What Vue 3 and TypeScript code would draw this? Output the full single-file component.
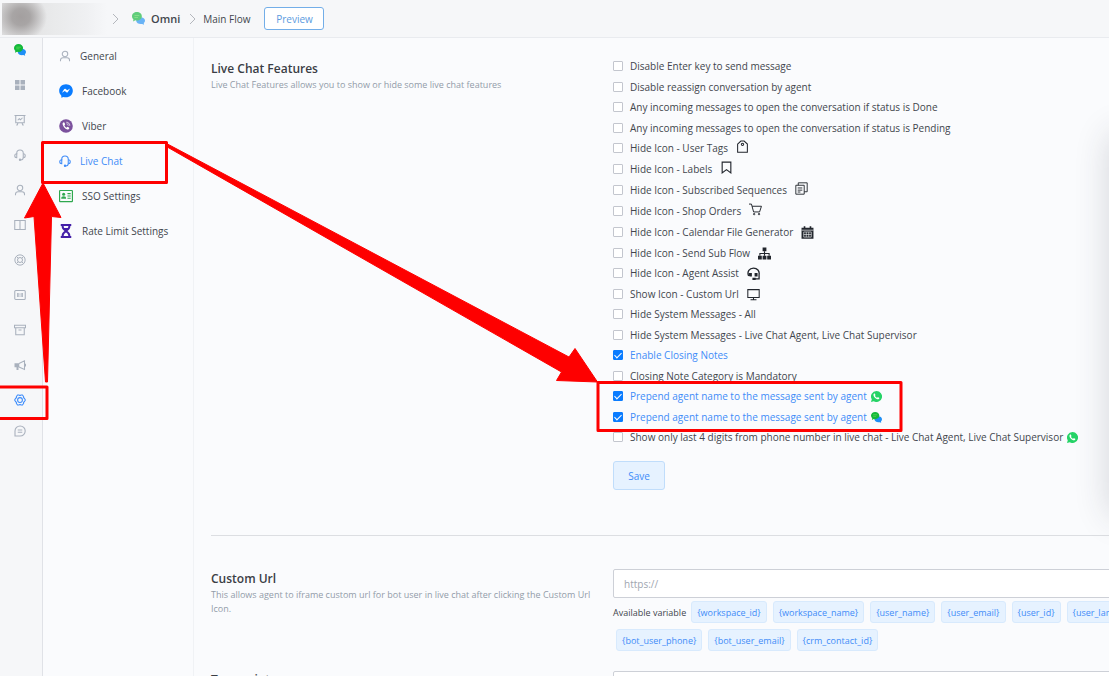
<script setup lang="ts">
import { reactive, ref } from 'vue'

interface Glyph { box: string; art: string }

const whatsapp = '<path fill="#25d366" d="M12 0a12 12 0 0 0-10.300 18.100L0 24l6.100-1.600A12 12 0 1 0 12 0z"/><path fill="#fff" d="M8.600 6.200c-.300-.600-.600-.600-1-.600-.400 0-2.300.700-2.300 3.100 0 1.800 1.200 3.600 2.700 5.300 2.200 2.500 4.800 4 7 4.100 1.800 0 3.200-1.100 3.300-2.700 0-.500-.100-.700-.500-.900l-2.300-1.100c-.400-.200-.700-.100-1 .300l-.800 1c-.300.300-.600.300-.900.100-1.800-.800-3.100-2-4-3.700-.200-.300-.100-.500.100-.800l.700-.900c.200-.300.200-.500.100-.800z"/>'

const glyphs: Record<string, Glyph> = {
  chats: { box: '0 0 24 24', art: '<path fill="#1e8ff5" d="M15.500 9.500c5 0 8.500 2.700 8.500 6.300 0 1.900-.900 3.500-2.300 4.700l.6 3-3.600-1.400c-5 1.100-10.700-1.100-11.200-6.300z"/><path fill="#12b83a" d="M9 0c5.200 0 9.200 3.400 9.200 7.900s-4 7.900-9.200 7.900c-1 0-2-.1-2.900-.400L2 17.500l.7-3.800C1 12.200 0 10.200 0 7.900 0 3.400 4 0 9 0z"/><path fill="#5fdc55" d="M4.500 5.500h9v1.600h-9zM4.500 9h6.500v1.600H4.500z"/>' },
  grid: { box: '0 0 24 24', art: '<path fill="currentColor" d="M2 2h9v9H2zm11 0h9v9h-9zM2 13h9v9H2zm11 0h9v9h-9z"/>' },
  board: { box: '0 0 24 24', art: '<g fill="none" stroke="currentColor" stroke-width="2.100"><path d="M1 3h22M3.500 3v14.500h17V3M8 17.500 6.500 22H4.500M16 17.500l1.500 4.500h2"/><path d="m7.500 12.500 3-3 2.500 2 4-4"/></g>' },
  headset: { box: '0 0 24 24', art: '<g fill="none" stroke="currentColor" stroke-width="2.100"><path d="M5.500 10.500V8.500a6.500 6.500 0 0 1 13 0v8c0 3.500-2 5.500-5 5.500"/><path d="M5.500 9.500C3 9.500 1.500 11 1.500 13.500S3 17.500 5.500 17.500zM18.500 9.500c2.500 0 4 1.500 4 4s-1.500 4-4 4"/><circle cx="12" cy="21.500" r="1.300"/></g>' },
  person: { box: '0 0 24 24', art: '<g fill="none" stroke="currentColor" stroke-width="2.100"><circle cx="12" cy="8" r="5.500"/><path d="M3 22.500v-2.500c0-3 2-4.500 5-4.500h8c3 0 5 1.500 5 4.500v2.500"/></g>' },
  columns: { box: '0 0 24 24', art: '<path fill="none" stroke="currentColor" stroke-width="2.100" d="M1.500 3h21v18h-21zM12 3v18"/>' },
  ring: { box: '0 0 24 24', art: '<g fill="none" stroke="currentColor" stroke-width="2"><circle cx="12" cy="12" r="10.300"/><circle cx="12" cy="12" r="5"/><path d="M5 5l3.500 3.500M19 5l-3.500 3.500M5 19l3.500-3.500M19 19l-3.500-3.500"/></g>' },
  ratio: { box: '0 0 24 24', art: '<rect x="1.500" y="3" width="21" height="18" rx="2" fill="none" stroke="currentColor" stroke-width="2.100"/><path fill="none" stroke="currentColor" stroke-width="1.700" d="M7 8v8M9.500 8v8M14.500 8v8M17 8v8M12 9.500v1.500M12 13.500V15"/>' },
  archive: { box: '0 0 24 24', art: '<path fill="none" stroke="currentColor" stroke-width="2.100" d="M1 2.500h22v5H1zM3.500 7.500v14h17v-14M9 12h6"/>' },
  megaphone: { box: '0 0 24 24', art: '<path fill="currentColor" d="M1 8.500h9.500v8H9V22H5v-5.500H1z"/><path fill="none" stroke="currentColor" stroke-width="2.100" d="M10 9 21 3.500v17.500L10 16M21.500 10.500h1.500v3.500h-1.500"/>' },
  cog: { box: '0 0 24 24', art: '<g fill="none" stroke="currentColor" stroke-width="2.100"><path stroke-linejoin="round" d="M7 2h3l2 1.300L14 2h3l2.300 3.500-.2 2 1.600.9 2 3.600-2 3.600-1.600.9.200 2L17 22h-3l-2-1.300L10 22H7l-2.300-3.500.2-2-1.600-.9-2-3.600 2-3.600 1.600-.9-.2-2z"/><circle cx="12" cy="12" r="4.800"/></g>' },
  comment: { box: '0 0 24 24', art: '<g fill="none" stroke="currentColor" stroke-width="2.200"><path d="M2 22V12a10.200 10 0 1 1 10.200 10z"/><path d="M7.500 10h9M7.500 14.500h9"/></g>' },
  messenger: { box: '0 0 24 24', art: '<path fill="#0a7cff" d="M12 .5C5.300.5.300 5.300.300 11.700c0 3.400 1.400 6.300 3.700 8.300V23.500l3.500-1.400c1.400.5 2.900.8 4.500.8 6.700 0 11.700-4.800 11.700-11.200S18.700.5 12 .5z"/><path fill="#fff" d="m5 15 3.700-5.900c.6-.9 1.800-1.200 2.700-.5l2.700 2 4.900-2.800-3.700 5.900c-.6.900-1.800 1.200-2.700.5l-2.700-2z"/>' },
  viber: { box: '0 0 24 24', art: '<circle cx="12" cy="12" r="11.700" fill="#7b519d"/><path fill="#fff" d="M8.500 5.500c-1.500.5-2.700 1.800-2.300 3.300 1.200 4.300 3.800 7.400 8 9.200 1.500.5 3-.7 3.500-2.100.200-.6-2.800-2.700-3.400-2.500l-1.500 1.400c-1.700-.8-3-2.200-3.600-4L10.500 9.500c.2-.8-1.400-4-2-4z"/><path fill="none" stroke="#fff" stroke-width="1.300" d="M12.500 5.500c3.500 0 6 2.500 6 6M13 8.300c2 .1 2.800 1.200 2.900 3"/>' },
  idcard: { box: '0 0 24 24', art: '<rect x="1" y="2.500" width="22" height="19" rx="1" fill="none" stroke="#2fa84f" stroke-width="2"/><circle cx="8" cy="9" r="2.600" fill="#2fa84f"/><path fill="#2fa84f" d="M3.800 16.500c0-2.500 1.500-4 4.200-4s4.200 1.500 4.200 4zM14.500 7H20v2.200h-5.500zM14.500 11H20v2h-5.500zM14.500 14.800H20v1.700h-5.500z"/>' },
  hourglass: { box: '0 0 24 24', art: '<path fill="#4420a8" d="M3 0h18v3.500h-1.500c0 4.500-2 6.500-5 8.500 3 2 5 4 5 8.500H21V24H3v-3.500h1.500c0-4.500 2-6.500 5-8.500-3-2-5-4-5-8.500H3z"/><path fill="#fafbfd" d="M8 3.500h8c0 1.500-.4 2.500-1 3.500H9c-.6-1-1-2-1-3.500zM8 20.500c.3-3 2-5 4-6 2 1 3.700 3 4 6z"/>' },
  tag: { box: '0 0 24 24', art: '<g fill="none" stroke="currentColor" stroke-width="1.900"><path d="M3 7.500 9 2h6l6 5.500v15H3z"/><circle cx="12" cy="8" r="2.200"/></g>' },
  bookmark: { box: '0 0 24 24', art: '<path fill="none" stroke="currentColor" stroke-width="2.100" d="M4 2h16v20l-8-6-8 6z"/>' },
  sequences: { box: '0 0 24 24', art: '<path fill="none" stroke="currentColor" stroke-width="1.700" d="M1.500 6H17V22.500H1.500zM6 6V1.500h16.500v16.500H17M5 11h8.500M5 15h8.500M5 18.500h5"/>' },
  cart: { box: '0 0 24 24', art: '<g fill="none" stroke="currentColor" stroke-width="1.800"><path d="M0 2h4.500l4 14.500h11L23 6H5.700"/><circle cx="9.500" cy="20.500" r="1.300"/><circle cx="18.500" cy="20.500" r="1.300"/></g>' },
  calendar: { box: '0 0 24 24', art: '<path fill="currentColor" d="M1 3h4V.5h3V3h8V.5h3V3h4v20.500H1z"/><path fill="#fafbfd" d="M1 7h22v1.200H1z"/><path fill="none" stroke="#fafbfd" stroke-width="1.100" d="M5 11h14v9.500H5zM5 15.700h14M9.700 11v9.500M14.300 11v9.500"/>' },
  sitemap: { box: '0 0 24 24', art: '<path fill="currentColor" d="M8.500 1h7v7h-7zM0 16h7v7H0zM8.500 16h7v7h-7zM17 16h7v7h-7z"/><path fill="none" stroke="currentColor" stroke-width="2" d="M3.500 16v-4h17v4M12 8v8"/>' },
  agent: { box: '0 0 24 24', art: '<path fill="none" stroke="currentColor" stroke-width="2.400" d="M3 16.500C-.5 8.500 4.500 2 12 2c7 0 11.500 5.500 10.300 12v8H12"/><path fill="currentColor" d="M3 11h6v6.500H5L3 15zM14 11h5.500v6.500H14zM10 20h6v3.800h-6z"/>' },
  monitor: { box: '0 0 24 24', art: '<path fill="none" stroke="currentColor" stroke-width="1.900" d="M1.500 3h21v14.500h-21zM12 17.500v4M6.500 21.500h11"/>' },
  whatsapp: { box: '0 0 24 24', art: whatsapp },
}

const rail = [
  { id: 'chats', name: 'Channels' }, { id: 'grid', name: 'Dashboard' }, { id: 'board', name: 'Analytics' },
  { id: 'headset', name: 'Live chat' }, { id: 'person', name: 'Contacts' }, { id: 'columns', name: 'Content' },
  { id: 'ring', name: 'Support' }, { id: 'ratio', name: 'Tests' }, { id: 'archive', name: 'Archive' },
  { id: 'megaphone', name: 'Broadcast' }, { id: 'cog', name: 'Settings' },
]

const menu = [
  { icon: 'person', label: 'General', line: true },
  { icon: 'messenger', label: 'Facebook' },
  { icon: 'viber', label: 'Viber' },
  { icon: 'headset', label: 'Live Chat', line: true, active: true },
  { icon: 'idcard', label: 'SSO Settings' },
  { icon: 'hourglass', label: 'Rate Limit Settings' },
]

interface Option { label: string; on: boolean; icon?: string; raised?: boolean; small?: boolean }
const options = reactive<Option[]>([
  { label: 'Disable Enter key to send message', on: false },
  { label: 'Disable reassign conversation by agent', on: false },
  { label: 'Any incoming messages to open the conversation if status is Done', on: false },
  { label: 'Any incoming messages to open the conversation if status is Pending', on: false },
  { label: 'Hide Icon - User Tags', on: false, icon: 'tag', raised: true },
  { label: 'Hide Icon - Labels', on: false, icon: 'bookmark', raised: true },
  { label: 'Hide Icon - Subscribed Sequences', on: false, icon: 'sequences', raised: true },
  { label: 'Hide Icon - Shop Orders', on: false, icon: 'cart', raised: true },
  { label: 'Hide Icon - Calendar File Generator', on: false, icon: 'calendar' },
  { label: 'Hide Icon - Send Sub Flow', on: false, icon: 'sitemap' },
  { label: 'Hide Icon - Agent Assist', on: false, icon: 'agent' },
  { label: 'Show Icon - Custom Url', on: false, icon: 'monitor' },
  { label: 'Hide System Messages - All', on: false },
  { label: 'Hide System Messages - Live Chat Agent, Live Chat Supervisor', on: false },
  { label: 'Enable Closing Notes', on: true },
  { label: 'Closing Note Category is Mandatory', on: false },
  { label: 'Prepend agent name to the message sent by agent', on: true, icon: 'whatsapp', small: true },
  { label: 'Prepend agent name to the message sent by agent', on: true, icon: 'chats', small: true },
  { label: 'Show only last 4 digits from phone number in live chat - Live Chat Agent, Live Chat Supervisor', on: false, icon: 'whatsapp', small: true },
])

const variables = [
  '{workspace_id}', '{workspace_name}', '{user_name}', '{user_email}', '{user_id}', '{user_lang}',
  '{bot_user_phone}', '{bot_user_email}', '{crm_contact_id}',
]
const customUrl = ref('')
const nextValue = ref('')
</script>

<template>
  <div class="app">
    <header class="topbar">
      <span class="workspace" aria-hidden="true"></span>
      <svg class="chevron" viewBox="0 0 8 12"><path d="m2 1 5 5-5 5" /></svg>
      <svg class="brand" :viewBox="glyphs.chats.box" v-html="glyphs.chats.art"></svg>
      <a class="crumb strong" href="#">Omni</a>
      <svg class="chevron" viewBox="0 0 8 12"><path d="m2 1 5 5-5 5" /></svg>
      <a class="crumb" href="#">Main Flow</a>
      <button class="preview" type="button">Preview</button>
    </header>

    <div class="body">
      <nav class="rail" aria-label="Main">
        <div class="rail-group">
          <button v-for="item in rail" :key="item.id" type="button" :aria-label="item.name" :class="{ current: item.id === 'cog' }">
            <svg :viewBox="glyphs[item.id].box" v-html="glyphs[item.id].art"></svg>
          </button>
        </div>
        <button type="button" aria-label="Feedback">
          <svg :viewBox="glyphs.comment.box" v-html="glyphs.comment.art"></svg>
        </button>
      </nav>

      <nav class="menu" aria-label="Settings">
        <a v-for="item in menu" :key="item.label" href="#" :class="{ line: item.line, active: item.active }">
          <svg :viewBox="glyphs[item.icon].box" v-html="glyphs[item.icon].art"></svg>
          <span>{{ item.label }}</span>
        </a>
      </nav>

      <main class="content">
        <section class="section features">
          <div class="intro">
            <h2>Live Chat Features</h2>
            <p>Live Chat Features allows you to show or hide some live chat features</p>
          </div>
          <div class="fields">
            <ul class="options">
              <li v-for="(option, i) in options" :key="i" :class="{ roomy: option.raised }">
                <label :class="{ on: option.on }">
                  <input v-model="option.on" type="checkbox" />
                  <span>{{ option.label }}</span>
                  <svg
                    v-if="option.icon"
                    :class="{ raised: option.raised, small: option.small }"
                    :viewBox="glyphs[option.icon].box"
                    v-html="glyphs[option.icon].art"
                  ></svg>
                </label>
              </li>
            </ul>
            <button class="save" type="button">Save</button>
          </div>
        </section>

        <section class="section custom">
          <div class="intro">
            <h2>Custom Url</h2>
            <p>This allows agent to iframe custom url for bot user in live chat after clicking the Custom Url Icon.</p>
          </div>
          <div class="fields">
            <input v-model="customUrl" class="text" type="url" placeholder="https://" aria-label="Custom Url" />
            <div class="variables">
              <span>Available variable</span>
              <button v-for="name in variables" :key="name" type="button">{{ name }}</button>
            </div>
          </div>
        </section>

        <section class="section next">
          <div class="intro"><h2>Transcript</h2></div>
          <div class="fields"><input v-model="nextValue" class="text" type="text" aria-label="Transcript" /></div>
        </section>
      </main>
    </div>

    <div class="drawer" aria-hidden="true"></div>
    <svg class="marks" aria-hidden="true">
      <g fill="none" stroke="#fe0000" stroke-width="3" stroke-linejoin="round">
        <rect x="42.500" y="142.500" width="124" height="40" />
        <rect x="-3" y="387" width="50" height="31.500" />
        <rect x="598" y="382.500" width="303" height="48" />
      </g>
      <g fill="#fe0000" stroke="#fe0000" stroke-linejoin="round">
        <path d="M43 183 61 217.500 51.500 216.500 47.500 382H45.500L34 216.500 24.500 218z" />
        <path d="M166.500 143.500 569 357 575 348.500 597.500 382 556.500 380.500 561.500 372 165.500 146z" />
      </g>
    </svg>
  </div>
</template>

<style>
html,
body {
  margin: 0;
  background: #fafbfd;
}
</style>

<style scoped>
.app {
  position: relative;
  display: flex;
  flex-direction: column;
  height: 100vh;
  overflow: hidden;
  background: #fafbfd;
  color: #42464d;
  font-family: "Open Sans", "Noto Sans", sans-serif;
  font-size: 10px;
}
* { box-sizing: border-box; }
button, input { font: inherit; }
button { padding: 0; cursor: pointer; }
a { color: inherit; text-decoration: none; }
svg { display: block; flex: none; }

.topbar {
  display: flex;
  flex: none;
  align-items: center;
  height: 38px;
  padding-left: 2px;
  border-bottom: 1px solid #e9ebef;
  background: #f6f7f9;
}
.workspace {
  width: 105px;
  height: 32px;
  margin-right: 4px;
  background: radial-gradient(ellipse 26px 24px at 19px 14px, #a39f9f 0, #a8a5a5 35%, rgba(190, 188, 188, 0) 100%), linear-gradient(90deg, #dcdcdd 0, #e9eaeb 50%, #eff0f2 80%, #f6f7f9 100%);
}
.chevron {
  width: 8px;
  height: 12px;
  fill: none;
  stroke: #b4b7bd;
}
.brand {
  width: 13px;
  height: 13px;
  margin: 0 6px 0 13px;
  opacity: 0.65;
}
.crumb.strong { margin-right: 8px; font-size: 11px; font-weight: 600; }
.chevron + .crumb { margin: 0 14px 0 7px; }
.preview {
  width: 60px;
  height: 23px;
  border: 1px solid #73aee8;
  border-radius: 3px;
  background: #fff;
  color: #5b9be0;
}

.body { display: flex; flex: 1; min-height: 0; }
.rail {
  display: flex;
  flex: none;
  flex-direction: column;
  gap: 15px;
  width: 43px;
  padding-top: 4px;
  border-right: 1px solid #e0e2e7;
  background: #f6f7f9;
}
.rail-group { display: grid; gap: 19px; }
.rail button {
  display: grid;
  place-items: center;
  width: 39px;
  height: 16px;
  border: 0;
  background: none;
  color: #a9b1bd;
}
.rail .current { color: #3a8bfb; }
.rail svg { width: 12px; height: 12px; }

.menu {
  flex: none;
  width: 151px;
  border-right: 1px solid #f0f2f5;
}
.menu a {
  display: flex;
  align-items: center;
  gap: 9px;
  height: 35px;
  padding-left: 16px;
}
.menu svg { width: 14px; height: 14px; }
.menu .line svg { width: 12px; height: 12px; color: #a9b1bd; }
.menu .active,
.menu .active svg { color: #3f8cf8; }

.content { flex: 1; min-width: 0; padding: 22px 0 0 17px; }
.section {
  display: grid;
  grid-template-columns: 382px minmax(540px, 1fr);
  gap: 20px;
}
.features { padding-bottom: 45px; border-bottom: 1px solid #dcdee2; }
.custom { padding-top: 34px; }
.next { padding-top: 17px; }
h2 {
  margin: 0;
  color: #3a3e45;
  font-size: 12px;
  font-weight: 600;
  line-height: 18px;
}
p { margin: 0; color: #929ca9; font-size: 9px; line-height: 14px; }

.options { margin: -4px 0 0; padding: 0; list-style: none; }
.options li { height: 20px; }
.options li:nth-child(odd),
.options .roomy { height: 21px; }
.options label { display: inline-flex; align-items: center; height: 20px; white-space: nowrap; }
.options label.on { color: #3f8cf8; }
.options span { margin-left: 7px; }
.options svg { width: 13px; height: 13px; margin-left: 8px; color: #22262d; }
.options .raised { margin-bottom: 4px; }
.options .small { width: 11px; height: 11px; margin-left: 4px; }
.options input {
  flex: none;
  width: 10px;
  height: 10px;
  margin: 0;
  border: 1px solid #c3c6ce;
  border-radius: 1px;
  background: #fff;
  appearance: none;
}
.options input:checked { position: relative; border-color: #0a7cff; background: #0a7cff; }
.options input:checked::after {
  position: absolute;
  top: 0;
  left: 2px;
  width: 3px;
  height: 6px;
  border: solid #fff;
  border-width: 0 1px 1px 0;
  content: "";
  transform: rotate(45deg);
}
.save {
  width: 52px;
  height: 29px;
  margin-top: 13px;
  border: 1px solid #c0ddfb;
  border-radius: 3px;
  background: #e6f2ff;
  color: #3f8cf8;
}

.text {
  display: block;
  width: 100%;
  height: 29px;
  padding: 0 10px;
  border: 1px solid #cdd0d7;
  border-radius: 2px;
  background: #fff;
  color: #42464d;
}
.text::placeholder { color: #a0a6b0; opacity: 1; }
.custom .text { margin-top: -1px; }
.variables { display: flex; flex-wrap: wrap; align-items: center; }
.variables span { margin-right: 2px; font-size: 9px; }
.variables button {
  height: 22px;
  margin: 3px;
  padding: 0 5px;
  border: 1px solid #d8eafd;
  border-radius: 3px;
  background: #e6f2ff;
  color: #3f8cf8;
  font-size: 9px;
}

/* Off-canvas panel: only its shadow reaches the page edge. */
.drawer {
  position: absolute;
  top: 135px;
  right: -42px;
  width: 40px;
  height: 380px;
  box-shadow: 0 0 36px rgba(40, 45, 60, 0.2);
}
.marks {
  position: absolute;
  top: 0;
  left: 0;
  width: 100%;
  height: 100%;
  pointer-events: none;
}
</style>
